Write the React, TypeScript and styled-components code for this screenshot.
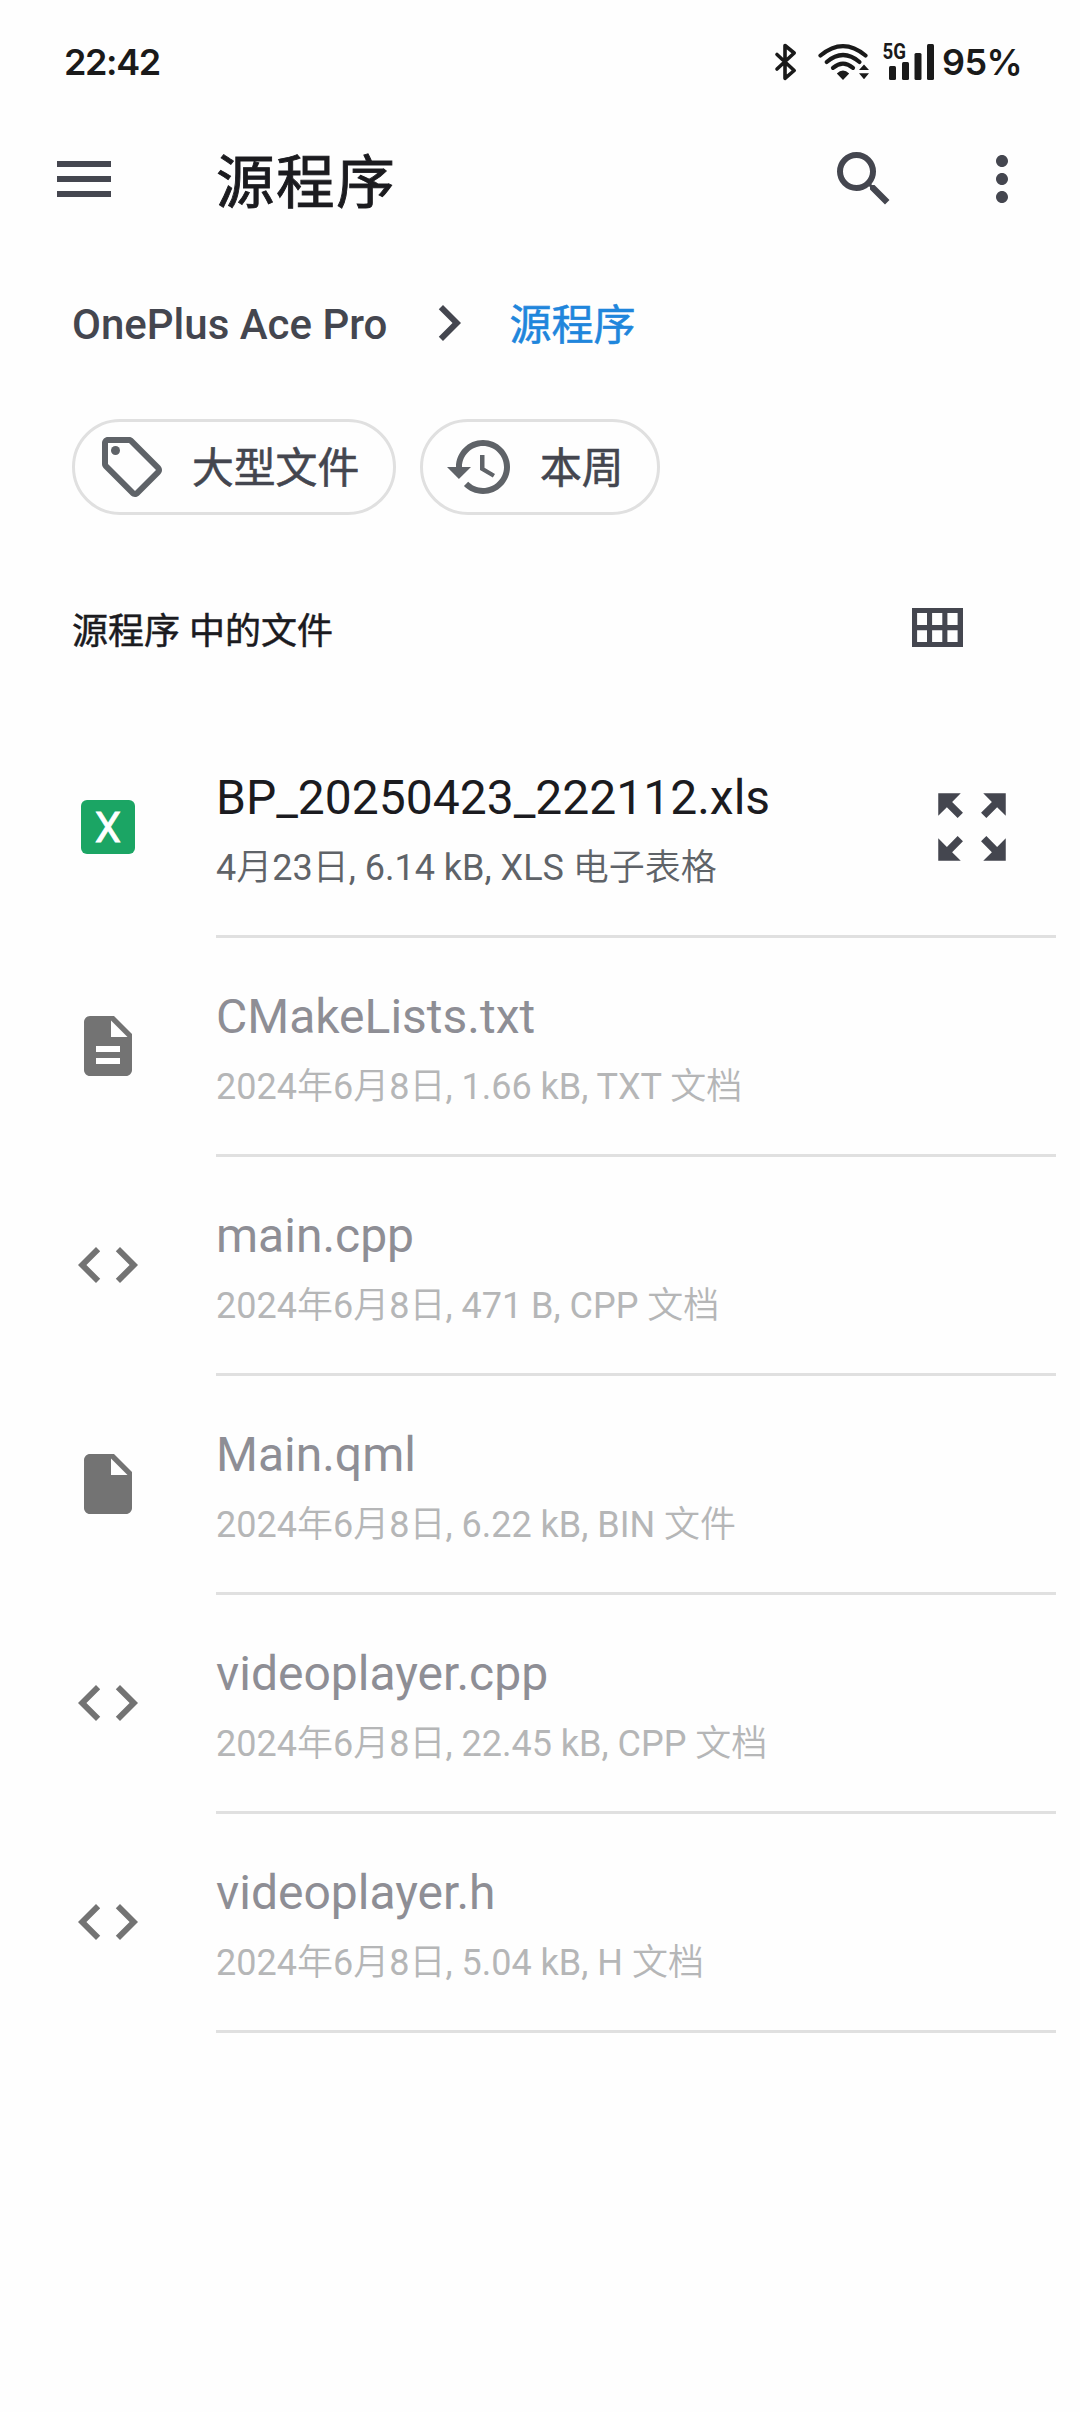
import React from "react";
import styled, { createGlobalStyle } from "styled-components";

const Global = createGlobalStyle`
  * { box-sizing: border-box; }
  body { margin: 0; background: #fefefe; font-family: Roboto, "Noto Sans CJK SC", sans-serif; }
`;

const Screen = styled.div`
  width: 1080px;
  height: 2412px;
  background: #fefefe;
  display: flex;
  flex-direction: column;
  overflow: hidden;
`;

const StatusBar = styled.header`
  height: 119px;
  padding: 4px 56px 0 64px;
  display: flex;
  align-items: center;
  justify-content: space-between;
  color: #1a1a1a;
  font-family: Inter, sans-serif;
  font-weight: 600;
  font-size: 36px;
  letter-spacing: -1.4px;
`;

const StatusIcons = styled.div`
  display: flex;
  align-items: center;
`;

const Signals = styled.svg`
  width: 172px;
  height: 44px;
  display: block;
`;

const Battery = styled.span`
  width: 82px;
  letter-spacing: -0.6px;
  white-space: nowrap;
`;

const AppBar = styled.nav`
  height: 120px;
  padding: 0 42px 0 48px;
  display: flex;
  align-items: center;
`;

const Title = styled.h1`
  margin: 0 auto 0 96px;
  padding-top: 7px;
  font-size: 58.5px;
  line-height: 72px;
  font-weight: 400;
  -webkit-text-stroke: 0.9px;
  letter-spacing: 1.6px;
  color: #1b1b1f;
`;

const Icon = styled.svg<{ $size?: number; $color?: string; $gap?: number }>`
  display: block;
  flex: none;
  width: ${(p) => p.$size ?? 72}px;
  height: ${(p) => p.$size ?? 72}px;
  margin-left: ${(p) => p.$gap ?? 0}px;
  fill: ${(p) => p.$color ?? "#44464f"};
`;

const Crumbs = styled.div`
  height: 168px;
  padding: 0 72px;
  display: flex;
  align-items: center;
  font-size: 42px;
  font-weight: 500;
  color: #44464f;
`;

const Parent = styled.span`
  padding-top: 2px;
`;

const Current = styled.span`
  margin-left: 24px;
  padding-bottom: 3px;
  font-weight: 400;
  -webkit-text-stroke: 0.6px;
  color: #1f86dc;
`;

const Chips = styled.div`
  height: 108px;
  padding: 12px 72px 0;
  display: flex;
  gap: 24px;
`;

const Chip = styled.button<{ $width: number }>`
  width: ${(p) => p.$width}px;
  height: 96px;
  padding: 0 0 0 21px;
  border: 3px solid #e0e0e0;
  border-radius: 48px;
  background: transparent;
  display: flex;
  align-items: center;
  gap: 24px;
  color: #44464f;
`;

const ChipLabel = styled.span`
  padding-bottom: 5px;
  font: 400 41.8px Roboto, "Noto Sans CJK SC", sans-serif;
  -webkit-text-stroke: 0.6px;
  white-space: nowrap;
`;

const SectionBar = styled.div`
  height: 204px;
  padding: 24px 108px 0 72px;
  display: flex;
  align-items: center;
  justify-content: space-between;
`;

const SectionTitle = styled.h2`
  margin: 0;
  padding-bottom: 2px;
  font-size: 36px;
  font-weight: 400;
  -webkit-text-stroke: 0.5px;
  color: #1b1b1f;
`;

const List = styled.ul`
  margin: 0;
  padding: 0;
  list-style: none;
`;

const Row = styled.li`
  height: 219px;
  padding: 0 24px 0 72px;
  display: flex;
`;

const Leading = styled.div`
  width: 144px;
  height: 216px;
  display: flex;
  align-items: center;
`;

const SheetBadge = styled.span`
  width: 54px;
  height: 54px;
  margin-left: 9px;
  border-radius: 6px;
  background: #1ba564;
  color: #fff;
  font-size: 42px;
  line-height: 55px;
  font-weight: 400;
  -webkit-text-stroke: 0.8px #fff;
  text-align: center;
`;

const Body = styled.div`
  flex: 1;
  border-bottom: 3px solid #e0e0e0;
  padding-right: 39px;
  display: flex;
  align-items: center;
  justify-content: space-between;
`;

const Labels = styled.div`
  padding-top: 3px;
`;

const Name = styled.div<{ $enabled?: boolean }>`
  font-size: 48px;
  line-height: 66px;
  color: ${(p) => (p.$enabled ? "#1b1b1f" : "#8e8e95")};
`;

const Detail = styled.div<{ $enabled?: boolean }>`
  font-size: 36px;
  line-height: 48px;
  margin-top: 9px;
  color: ${(p) => (p.$enabled ? "#5f6368" : "#b5b6b7")};
`;

const Han = styled.span`
  font-family: "Noto Sans CJK SC", sans-serif;
  font-weight: 350;
`;

const paths = {
  menu: "M3 18h18v-2H3v2zm0-5h18v-2H3v2zm0-7v2h18V6H3z",
  search:
    "M15.5 14h-.79l-.28-.27A6.471 6.471 0 0 0 16 9.5 6.5 6.5 0 1 0 9.5 16c1.61 0 3.09-.59 4.23-1.57l.27.28v.79l5 4.99L20.49 19l-4.99-5zm-6 0C7.01 14 5 11.99 5 9.5S7.01 5 9.5 5 14 7.01 14 9.5 11.99 14 9.5 14z",
  more: "M12 8c1.1 0 2-.9 2-2s-.9-2-2-2-2 .9-2 2 .9 2 2 2zm0 2c-1.1 0-2 .9-2 2s.9 2 2 2 2-.9 2-2-.9-2-2-2zm0 6c-1.1 0-2 .9-2 2s.9 2 2 2 2-.9 2-2-.9-2-2-2z",
  chevron: "M10 6L8.59 7.41 13.17 12l-4.58 4.59L10 18l6-6z",
  tag: "M21.41 11.58l-9-9C12.05 2.22 11.55 2 11 2H4c-1.1 0-2 .9-2 2v7c0 .55.22 1.05.59 1.42l9 9c.36.36.86.58 1.41.58s1.05-.22 1.41-.59l7-7c.37-.36.59-.86.59-1.41s-.23-1.06-.59-1.42zM13 20.01L4 11V4h7v-.01l9 9-7 7.02z",
  history:
    "M13 3c-4.97 0-9 4.03-9 9H1l3.89 3.89.07.14L9 12H6c0-3.87 3.13-7 7-7s7 3.13 7 7-3.13 7-7 7c-1.93 0-3.68-.79-4.94-2.06l-1.42 1.42C8.27 19.99 10.51 21 13 21c4.97 0 9-4.03 9-9s-4.03-9-9-9zm-1 5v5l4.28 2.54.72-1.21-3.5-2.08V8H12z",
  grid: "M4 5v13h17V5H4zM9 16.3H5.7V12.4H9zM9 10.7H5.7V6.7H9zM14.1 16.3h-3.4V12.4h3.4zM14.1 10.7h-3.4V6.7h3.4zM19.2 16.3h-3.4V12.4h3.4zM19.2 10.7h-3.4V6.7h3.4z",
  expand:
    "M15 3l2.3 2.3-2.89 2.87 1.42 1.42L18.7 6.7 21 9V3h-6zM3 9l2.3-2.3 2.87 2.89 1.42-1.42L6.7 5.3 9 3H3v6zm6 12l-2.3-2.3 2.89-2.87-1.42-1.42L5.3 17.3 3 15v6h6zm12-6l-2.3 2.3-2.87-2.89-1.42 1.42 2.89 2.87L15 21h6v-6z",
  text: "M14 2H6c-1.1 0-1.99.9-1.99 2L4 20c0 1.1.89 2 1.99 2H18c1.1 0 2-.9 2-2V8l-6-6zm2 16H8v-2h8v2zm0-4H8v-2h8v2zm-3-5V3.5L18.5 9H13z",
  file: "M6 2c-1.1 0-1.99.9-1.99 2L4 20c0 1.1.89 2 1.99 2H18c1.1 0 2-.9 2-2V8l-6-6H6zm7 7V3.5L18.5 9H13z",
  code: "M9.4 16.6L4.8 12l4.6-4.6L8 6l-6 6 6 6 1.4-1.4zm5.2 0l4.6-4.6-4.6-4.6L16 6l6 6-6 6-1.4-1.4z",
};

type Glyph = keyof typeof paths;

const MIcon = ({ name, size, color, gap }: { name: Glyph; size?: number; color?: string; gap?: number }) => (
  <Icon viewBox="0 0 24 24" $size={size} $color={color} $gap={gap} aria-hidden>
    <path fillRule="evenodd" d={paths[name]} />
    {name === "tag" && <circle cx="6.5" cy="6.5" r="1.5" />}
  </Icon>
);

/* Chinese runs are set in a lighter weight than the Latin text around them. */
const mixed = (text: string) =>
  text
    .split(/([\u4e00-\u9fff]+)/)
    .map((part, i) => (i % 2 ? <Han key={i}>{part}</Han> : part));

const files: { name: string; detail: string; icon?: Glyph }[] = [
  { name: "BP_20250423_222112.xls", detail: "4月23日, 6.14 kB, XLS 电子表格" },
  { name: "CMakeLists.txt", detail: "2024年6月8日, 1.66 kB, TXT 文档", icon: "text" },
  { name: "main.cpp", detail: "2024年6月8日, 471 B, CPP 文档", icon: "code" },
  { name: "Main.qml", detail: "2024年6月8日, 6.22 kB, BIN 文件", icon: "file" },
  { name: "videoplayer.cpp", detail: "2024年6月8日, 22.45 kB, CPP 文档", icon: "code" },
  { name: "videoplayer.h", detail: "2024年6月8日, 5.04 kB, H 文档", icon: "code" },
];

export default function App() {
  return (
    <Screen lang="zh-CN">
      <Global />
      <StatusBar>
        <span>22:42</span>
        <StatusIcons>
          <Signals viewBox="770 40 172 44" fill="#1a1a1a">
            <path d="M777 54.500L794.200 70.500L785 78.300V45.500L794.200 53L777 69" fill="none" stroke="#1a1a1a" strokeWidth="3.6" strokeLinejoin="round" strokeLinecap="round" />
            <g fill="none" stroke="#1a1a1a" strokeWidth="4.200" strokeLinecap="round">
              <path d="M820.500 55.500Q843 36.700 865.500 55.500" />
              <path d="M826.700 62Q843 48 859.500 62" />
              <path d="M833 67.800Q843 59.500 853 67.800" />
            </g>
            <path d="M836.800 73.500Q843 67.500 849.200 73.500L843 80zM859 70L864 64.600L869 70zM859 73.300L864 79.300L869 73.300z" />
            <rect x="889" y="66" width="7" height="14" rx="1.500" />
            <rect x="902" y="62" width="7" height="18" rx="1.500" />
            <rect x="914.500" y="53" width="7" height="27" rx="1.500" />
            <rect x="927" y="44" width="7" height="36" rx="1.500" />
            <text x="882.500" y="58.500" fontFamily="Roboto" fontWeight="700" fontSize="21.500" letterSpacing="0" textLength="23.500" lengthAdjust="spacingAndGlyphs">5G</text>
          </Signals>
          <Battery>95%</Battery>
        </StatusIcons>
      </StatusBar>
      <AppBar>
        <MIcon name="menu" />
        <Title>源程序</Title>
        <MIcon name="search" />
        <MIcon name="more" gap={66} />
      </AppBar>
      <Crumbs>
        <Parent>OnePlus Ace Pro</Parent>
        <MIcon name="chevron" gap={26} />
        <Current>源程序</Current>
      </Crumbs>
      <Chips>
        <Chip $width={324}>
          <MIcon name="tag" color="#5f6368" />
          <ChipLabel>大型文件</ChipLabel>
        </Chip>
        <Chip $width={240}>
          <MIcon name="history" color="#5f6368" />
          <ChipLabel>本周</ChipLabel>
        </Chip>
      </Chips>
      <SectionBar>
        <SectionTitle>源程序 中的文件</SectionTitle>
        <MIcon name="grid" />
      </SectionBar>
      <List>
        {files.map((f) => (
          <Row key={f.name}>
            <Leading>
              {f.icon ? <MIcon name={f.icon} color="#737373" /> : <SheetBadge>X</SheetBadge>}
            </Leading>
            <Body>
              <Labels>
                <Name $enabled={!f.icon}>{f.name}</Name>
                <Detail $enabled={!f.icon}>{mixed(f.detail)}</Detail>
              </Labels>
              {!f.icon && <MIcon name="expand" size={90} />}
            </Body>
          </Row>
        ))}
      </List>
    </Screen>
  );
}
